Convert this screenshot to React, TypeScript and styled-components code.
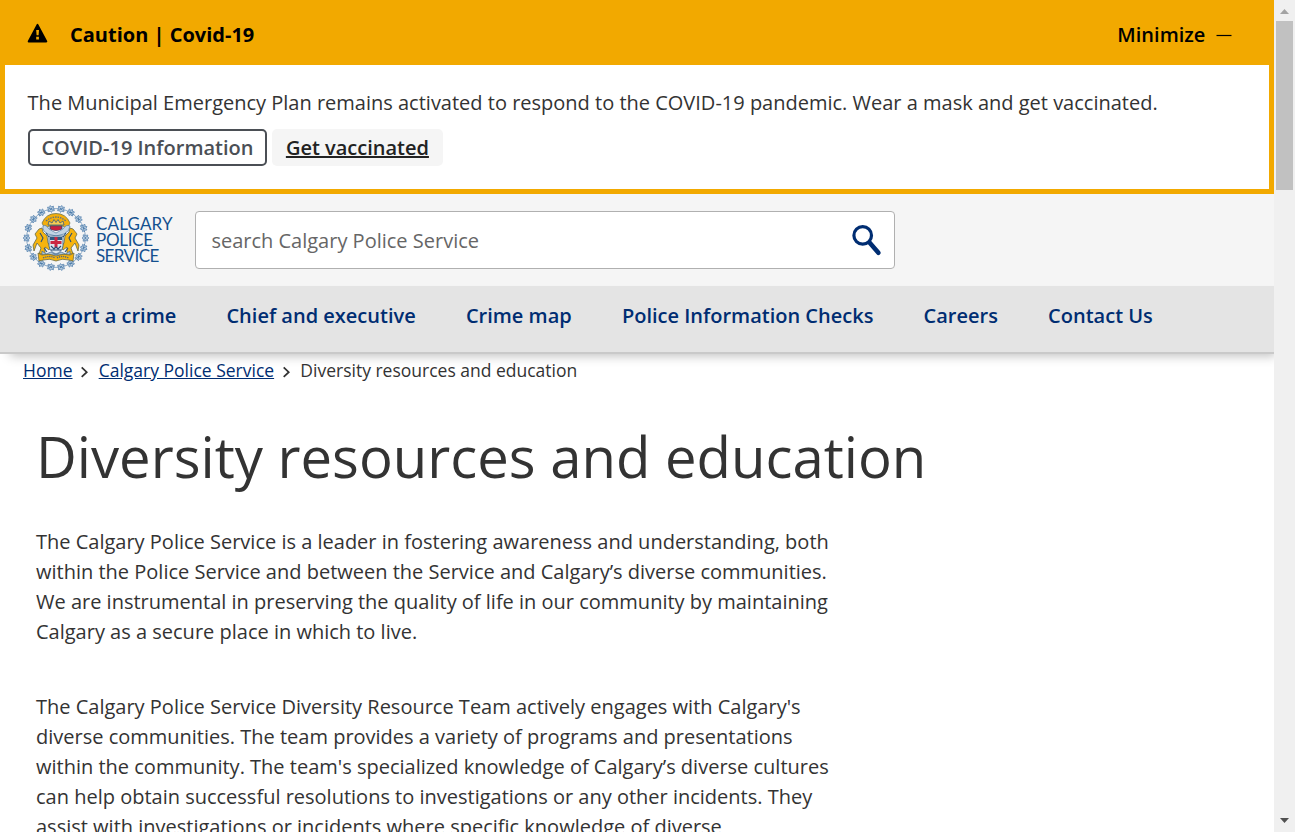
import React from 'react';
import styled, { createGlobalStyle } from 'styled-components';

const Global = createGlobalStyle`
  * { box-sizing: border-box; }
  html, body { margin: 0; height: 100%; overflow: hidden; }
  body { font-family: "Open Sans", "Noto Sans", sans-serif; font-size: 20px; line-height: 30px; color: #333; background: #fff; }
  a { color: inherit; }
  h1, p { margin: 0; }
`;

const Window = styled.div`
  display: flex;
  height: 832px;
  overflow: hidden;
`;

const Page = styled.div`
  width: 1274px;
  flex: none;
  overflow: hidden;
`;

const Alert = styled.section`
  height: 194px;
  border: 5px solid #f2a900;
  border-top: 0;
`;

const AlertBar = styled.header`
  height: 65px;
  padding: 4px 37px 0 22px;
  background: #f2a900;
  color: #000;
  display: flex;
  align-items: center;
`;

const WarningIcon = styled.svg`
  width: 21px;
  height: 20px;
  margin-top: -3px;
`;

const AlertTitle = styled.strong`
  flex: 1;
  margin-left: 22px;
  font-weight: 700;
`;

const Minimize = styled.button`
  display: flex;
  align-items: center;
  gap: 10.6px;
  padding: 0;
  border: 0;
  background: none;
  font: 600 20px/30px "Open Sans", sans-serif;
  color: #000;
`;

const AlertBody = styled.div`
  padding: 23px 23px 0 22.6px;
`;

const Actions = styled.div`
  display: flex;
  gap: 5px;
  margin: 11px 0 0 0.4px;
`;

const Action = styled.a<{ $outlined?: boolean }>`
  height: 37px;
  padding: ${p => (p.$outlined ? '0 11.4px' : '2px 14px')};
  border: ${p => (p.$outlined ? '2px solid #4b4f55' : '0')};
  border-radius: 5px;
  background: ${p => (p.$outlined ? '#fff' : '#f5f5f5')};
  color: ${p => (p.$outlined ? '#4b4f55' : '#222')};
  text-decoration: ${p => (p.$outlined ? 'none' : 'underline')};
  font-weight: 600;
  line-height: 33px;
  white-space: nowrap;
`;

const Masthead = styled.header`
  display: flex;
  height: 92px;
  padding: 17px 22px 0;
  background: #f5f5f5;
`;

const Brand = styled.a`
  display: flex;
  width: 173px;
  margin-top: -7px;
  gap: 6px;
`;

const BrandName = styled.span`
  margin-top: 12px;
  font: 17px/16px Lato, sans-serif;
  color: #14508f;
`;

const BrandLine = styled.span<{ $spacing: number }>`
  display: block;
  letter-spacing: ${p => p.$spacing}px;
`;

const Search = styled.div`
  display: flex;
  justify-content: space-between;
  align-items: center;
  width: 700px;
  height: 58px;
  padding: 2px 12px 0 15.4px;
  border: 1px solid #b0b0b0;
  border-radius: 4px;
  background: #fff;
  color: #666;
`;

const Nav = styled.nav`
  display: flex;
  position: relative;
  gap: 50.2px;
  height: 68px;
  padding: 15px 34px 0;
  border-bottom: 2px solid #c9c9c9;
  background: #e4e4e4;
  box-shadow: 6px 6px 10px -4px rgba(0, 0, 0, 0.25);
`;

const NavLink = styled.a`
  font-weight: 600;
  color: #002d72;
  white-space: nowrap;
`;

const Breadcrumb = styled.nav`
  display: flex;
  align-items: center;
  height: 34px;
  padding: 0 0 2px 23px;
  font-size: 17.5px;
`;

const Crumb = styled.a`
  color: #002d72;
  text-decoration: underline;
`;

const Content = styled.main`
  padding: 27px 36px 0;
`;

const Title = styled.h1`
  margin-bottom: 30px;
  font-size: 56.25px;
  font-weight: 400;
  line-height: 82px;
  white-space: nowrap;
`;

const Paragraph = styled.p`
  margin-bottom: 45px;
  white-space: pre;
`;

const Scrollbar = styled.aside`
  display: flex;
  flex-direction: column;
  align-items: center;
  width: 21px;
  background: #f0f0f0;
`;

const ScrollButton = styled.svg`
  flex: none;
  width: 21px;
  height: 21px;
`;

const Thumb = styled.div`
  width: 17px;
  height: 169px;
  margin-bottom: auto;
  background: #c1c1c1;
`;

const Separator = () => (
  <svg width="26.2" height="18" viewBox="0 0 27 18">
    <path d="M10 6.2l5.2 5-5.2 5" fill="none" stroke="#333" strokeWidth="1.8" />
  </svg>
);

const badges = Array.from({ length: 18 }, (_, i) => i * 20 + 10);

const Crest = () => (
  <svg width="68" height="68" viewBox="0 0 68 68">
    {badges.map(angle => (
      <g key={angle} transform={`rotate(${angle} 34 34) translate(34 4.6)`}>
        <path d="M-3-2.4L-1-2 0-3.6 1-2 3-2.4 2.5 0 3.2 2.2 1 2 0 3.4-1 2-3.2 2.2-2.5 0Z" fill="#b9cde0" stroke="#5d88b3" strokeWidth=".8" />
        <path d="M-4.8.4H-2.5M2.5.4H4.8M-1.6-1L1.6 1M1.6-1L-1.6 1" stroke="#4a7aa9" strokeWidth=".8" />
      </g>
    ))}
    <path d="M20 19Q24 9.5 34 9.5T48 19L45 25 41 22H27L23 25Z" fill="#f3ae0c" stroke="#6e7550" strokeWidth=".8" />
    <path d="M24 17Q34 9 44 17" fill="none" stroke="#56718a" strokeWidth="1.3" strokeDasharray="1.5 1" />
    <path d="M26 21L27 17 30 19 32 15.5 34 18.5 36 15.5 38 19 41 17 42 21Z" fill="#f8cd52" stroke="#375d85" strokeWidth=".8" />
    <path d="M28 22H40V25Q34 28 28 25Z" fill="#c8213d" stroke="#244f7e" strokeWidth=".8" />
    <path d="M21 22Q24 20 27 25 32 28 34 29 36 28 41 25 44 20 48 22 48 27 42 30L34 32 26 30Q20 27 21 22Z" fill="#c2d4e4" stroke="#5e86ac" strokeWidth=".8" />
    <path d="M29 22.5h10v2.7q-5 2-10 0Z" fill="#c8213d" />
    <path d="M13 30L17 25 20 24 21 28 25 32 26 39 29 43 27 46 23 43 23 50H17L19 44 15 39 12 47 11 41 15 34Z" fill="#f6b40e" stroke="#636b4c" strokeWidth=".8" />
    <path d="M55 30L51 25 48 24 47 28 43 32 42 39 39 43 41 46 45 43 45 50H51L49 44 53 39 56 47 57 41 53 34Z" fill="#f6b40e" stroke="#636b4c" strokeWidth=".8" />
    <path d="M27 32H41V42Q40 48 34 50 28 48 27 42Z" fill="#dce7ef" stroke="#2f5984" strokeWidth=".8" />
    <path d="M28 33H40V36H28Z" fill="#31587f" />
    <path d="M32.5 33h3v4h4v3h-4v4h-3v-4h-4v-3h4Z" fill="#cb2843" />
    <path d="M29 42l3 3 2-2 2 2 3-3M29 46h10M24 29l3 4M44 29l-3 4M18 29l3 5-2 4M50 29l-3 5 2 4M22 44l3 4M46 44l-3 4" fill="none" stroke="#284f78" strokeWidth="1.1" />
    <path d="M20 47l4 3 5-2 5 3 5-3 5 2 4-3v4H20Z" fill="#adc4d7" stroke="#456f98" strokeWidth=".7" />
    <path d="M16 49L20 51Q27 49 34 52 41 49 48 51L52 49 51 57 47 56Q40 54 34 57 28 54 21 56L17 57Z" fill="#f5b20c" stroke="#6e6b3e" strokeWidth=".8" />
    <path d="M21 54Q28 51 33 54M35 54Q40 51 47 54" fill="none" stroke="#596978" strokeWidth="1.3" strokeDasharray="1.3 .8" />
  </svg>
);

const links = ['Report a crime', 'Chief and executive', 'Crime map', 'Police Information Checks', 'Careers', 'Contact Us'];

export default function App() {
  return (
    <Window>
      <Global />
      <Page>
        <Alert>
          <AlertBar>
            <WarningIcon viewBox="0 0 21 20">
              <path d="M10.5 1.9L19.3 18.4H1.7Z" fill="#000" stroke="#000" strokeWidth="2" strokeLinejoin="round" />
              <path d="M9.2 7h2.8l-.4 5.3h-2ZM9.2 13.7h2.7v2.8H9.2Z" fill="#f2a900" />
            </WarningIcon>
            <AlertTitle>Caution | Covid-19</AlertTitle>
            <Minimize>
              Minimize
              <svg width="16" height="4"><path d="M.5 2.5h15" stroke="#000" strokeWidth="1.2" /></svg>
            </Minimize>
          </AlertBar>
          <AlertBody>
            <p>The Municipal Emergency Plan remains activated to respond to the COVID-19 pandemic. Wear a mask and get vaccinated.</p>
            <Actions>
              <Action $outlined>COVID-19 Information</Action>
              <Action>Get vaccinated</Action>
            </Actions>
          </AlertBody>
        </Alert>
        <Masthead>
          <Brand>
            <Crest />
            <BrandName>
              <BrandLine $spacing={0.15}>CALGARY</BrandLine>
              <BrandLine $spacing={-0.3}>POLICE</BrandLine>
              <BrandLine $spacing={-0.6}>SERVICE</BrandLine>
            </BrandName>
          </Brand>
          <Search>
            search Calgary Police Service
            <svg width="30" height="32" viewBox="0 0 30 32">
              <circle cx="10.7" cy="10.4" r="8.8" fill="none" stroke="#002d72" strokeWidth="3.2" />
              <path d="M17.5 17.6L26.4 27.7" stroke="#002d72" strokeWidth="4.6" strokeLinecap="round" />
            </svg>
          </Search>
        </Masthead>
        <Nav>{links.map(link => <NavLink key={link}>{link}</NavLink>)}</Nav>
        <Breadcrumb>
          <Crumb>Home</Crumb>
          <Separator />
          <Crumb>Calgary Police Service</Crumb>
          <Separator />
          <span>Diversity resources and education</span>
        </Breadcrumb>
        <Content>
          <Title>Diversity resources and education</Title>
          <Paragraph>{`The Calgary Police Service is a leader in fostering awareness and understanding, both
within the Police Service and between the Service and Calgary’s diverse communities.
We are instrumental in preserving the quality of life in our community by maintaining
Calgary as a secure place in which to live.`}</Paragraph>
          <Paragraph>{`The Calgary Police Service Diversity Resource Team actively engages with Calgary's
diverse communities. The team provides a variety of programs and presentations
within the community. The team's specialized knowledge of Calgary’s diverse cultures
can help obtain successful resolutions to investigations or any other incidents. They
assist with investigations or incidents where specific knowledge of diverse`}</Paragraph>
        </Content>
      </Page>
      <Scrollbar>
        <ScrollButton viewBox="0 0 21 21"><path d="M6 14l4.5-5 4.5 5Z" fill="#a3a3a3" /></ScrollButton>
        <Thumb />
        <ScrollButton viewBox="0 0 21 21"><path d="M6 7h9l-4.5 5Z" fill="#505050" /></ScrollButton>
      </Scrollbar>
    </Window>
  );
}
